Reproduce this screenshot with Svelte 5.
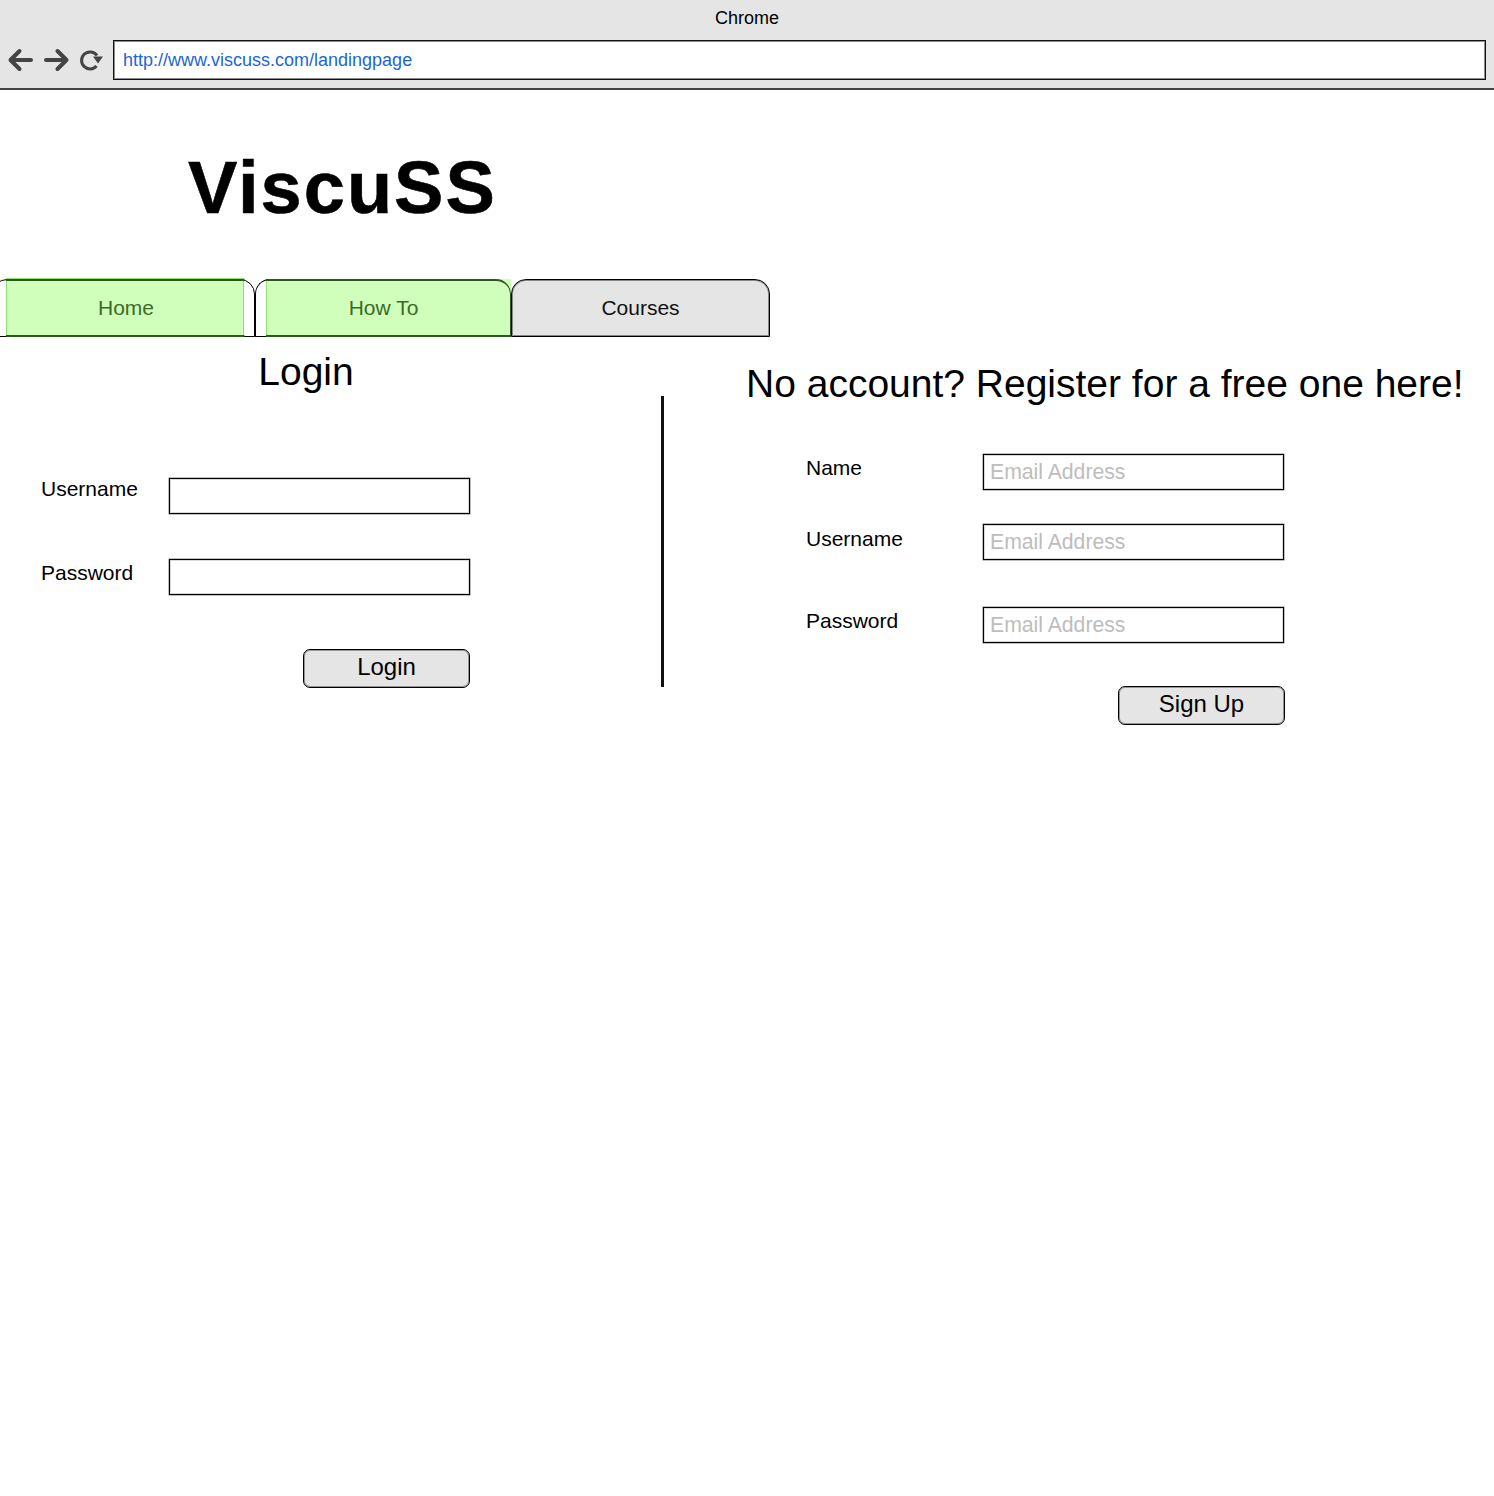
<script>
  const loginFields = [
    { label: 'Username', cls: 'l1' },
    { label: 'Password', cls: 'l2' }
  ];
  const signupFields = [
    { label: 'Name', cls: 'r1' },
    { label: 'Username', cls: 'r2' },
    { label: 'Password', cls: 'r3' }
  ];
</script>

<div class="page">
  <header class="chrome">
    <div class="title">Chrome</div>
    <div class="toolbar">
      <svg class="icons" width="104" height="40" viewBox="0 0 104 40" fill="none" stroke="#444" stroke-width="4" stroke-linecap="round" stroke-linejoin="round">
        <path d="M10.500 20H31M19.500 11L10.500 20L19.500 29" />
        <path d="M46 20H66.500M57.500 11L66.500 20L57.500 29" />
        <path d="M97 15.500A8.500 8.500 0 1 0 96.500 26" stroke-width="3" stroke-linecap="butt" />
        <path d="M93 16.500H103L98 23.500Z" fill="#444" stroke="none" />
      </svg>
      <div class="url">http://www.viscuss.com/landingpage</div>
    </div>
  </header>

  <div class="brand">ViscuSS</div>

  <nav class="tabs">
    <div class="tab home"><div class="fill"><span>Home</span></div></div>
    <div class="tab howto"><div class="fill"><span>How To</span></div></div>
    <div class="tab courses">Courses</div>
  </nav>

  <main class="content">
    <section class="login">
      <h2>Login</h2>
      {#each loginFields as f}
        <div class="row {f.cls}">
          <span class="label">{f.label}</span>
          <input class="field" type="text" />
        </div>
      {/each}
      <button class="btn">Login</button>
    </section>

    <div class="divider"></div>

    <section class="register">
      <h2>No account? Register for a free one here!</h2>
      {#each signupFields as f}
        <div class="row {f.cls}">
          <span class="label">{f.label}</span>
          <input class="field" type="text" placeholder="Email Address" />
        </div>
      {/each}
      <button class="btn">Sign Up</button>
    </section>
  </main>
</div>

<style>
  :global(body) {
    margin: 0;
    background: #fff;
  }
  .page {
    min-height: 1496px;
    width: 1494px;
    overflow: hidden;
    font-family: "Liberation Sans", Arial, sans-serif;
    color: #000;
  }
  .chrome {
    height: 90px;
    box-sizing: border-box;
    background: #e5e5e5;
    border-bottom: 2px solid #444;
  }
  .title {
    height: 40px;
    padding-top: 8px;
    box-sizing: border-box;
    text-align: center;
    font-size: 18px;
    line-height: 21px;
  }
  .toolbar {
    display: flex;
    height: 40px;
  }
  .icons {
    display: block;
    flex: none;
    width: 104px;
    margin-right: 9px;
  }
  .url {
    width: 1373px;
    box-sizing: border-box;
    border: 1px solid #111;
    box-shadow: inset 0 0 0 1px rgba(0, 0, 0, 0.45);
    background: #fff;
    color: #1a66d8;
    font-size: 18px;
    line-height: 38px;
    padding-left: 9px;
  }
  .brand {
    height: 189px;
    box-sizing: border-box;
    padding: 56px 0 0 188px;
    font-size: 74px;
    letter-spacing: 2px;
    line-height: 84px;
    font-weight: 700;
    -webkit-text-stroke: 0.600px #000;
  }
  .tabs {
    display: flex;
    height: 58px;
    margin-left: -8px;
    width: 778px;
    font-size: 21px;
  }
  .tab {
    box-sizing: border-box;
    height: 58px;
    border: 1px solid #000;
    border-radius: 15px 15px 0 0;
    display: flex;
    background: #fff;
  }
  .home {
    width: 263px;
    padding-left: 13px;
    padding-right: 10px;
  }
  .howto {
    width: 256px;
    padding-left: 10px;
    border-right: 0;
    border-radius: 15px 0 0 0;
  }
  .courses {
    width: 259px;
    box-shadow: inset 0 0 0 1px rgba(0, 0, 0, 0.4);
    background: #e5e5e5;
    align-items: center;
    justify-content: center;
    color: #111;
  }
  .fill {
    position: relative;
    flex: 1;
    margin: -1px 0;
    background: #d0ffbc;
    border: solid #8ee56c;
    border-width: 0 1.500px;
    color: #3c6b26;
    display: flex;
    align-items: center;
    justify-content: center;
  }
  .fill::after {
    content: "";
    position: absolute;
    inset: 0 -1.500px;
    border-top: 2px solid #2c5a1d;
    border-bottom: 2px solid #2c5a1d;
    box-shadow: 0 -1px 0 #8ee56c;
    clip-path: inset(-1px 0 0 0);
  }
  .home .fill span {
    margin-left: 2px;
  }
  .howto .fill {
    border-right: 0;
    padding-right: 11px;
  }
  .howto .fill::after {
    right: 0;
    border-right: 1.500px solid #2c5a1d;
    border-top-right-radius: 15px;
    box-shadow: none;
  }
  .content {
    display: flex;
    align-items: flex-start;
  }
  section {
    position: relative;
    box-sizing: border-box;
  }
  .login {
    width: 661px;
    height: 360px;
    padding-left: 41px;
  }
  h2 {
    margin: 0;
    font-weight: 400;
  }
  .login h2 {
    font-size: 39px;
    line-height: 44px;
    padding-top: 13px;
    width: 530px;
    text-align: center;
  }
  .divider {
    width: 3px;
    height: 291px;
    margin-top: 59px;
    background: #111;
    flex: none;
  }
  .register {
    padding: 0 0 0 82px;
  }
  .register h2 {
    font-size: 39px;
    line-height: 44px;
    padding-top: 25px;
    white-space: nowrap;
  }
  .row {
    display: flex;
    align-items: flex-start;
    font-size: 21px;
    line-height: 24px;
  }
  .label {
    display: block;
  }
  .login .label {
    width: 128px;
    flex: none;
  }
  .register .label {
    width: 177px;
    flex: none;
  }
  .register .row {
    margin-left: 60px;
  }
  .field {
    width: 301px;
    height: 36px;
    box-sizing: border-box;
    border: 1px solid #000;
    box-shadow: inset 0 0 0 1px rgba(0, 0, 0, 0.15), 0 0 0 0.500px rgba(0, 0, 0, 0.5);
    background: #fff;
    padding: 0 6px;
    margin: 0;
    font-family: inherit;
    font-size: 21.200px;
    border-radius: 0;
    outline: none;
  }
  .field::placeholder {
    color: #bdbdbd;
    opacity: 1;
  }
  .l1 { margin-top: 84px; }
  .l1 .label { margin-top: -1px; }
  .l2 { margin-top: 45px; }
  .l2 .label { margin-top: 2px; }
  .r1 { margin-top: 48px; }
  .r1 .label { margin-top: 2px; }
  .r2 { margin-top: 34px; }
  .r2 .label { margin-top: 3px; }
  .r3 { margin-top: 47px; }
  .r3 .label { margin-top: 2px; }
  .btn {
    display: block;
    box-sizing: border-box;
    width: 167px;
    height: 39px;
    border: 1px solid #000;
    box-shadow: inset 0 0 0 1px rgba(0, 0, 0, 0.35);
    border-radius: 7px;
    background: #e5e5e5;
    color: #000;
    font-family: inherit;
    font-size: 24px;
    line-height: 34px;
    padding: 0 0 3px;
    margin: 54px 0 0 262px;
  }
  .register .btn {
    margin: 43px 0 0 372px;
  }
</style>
